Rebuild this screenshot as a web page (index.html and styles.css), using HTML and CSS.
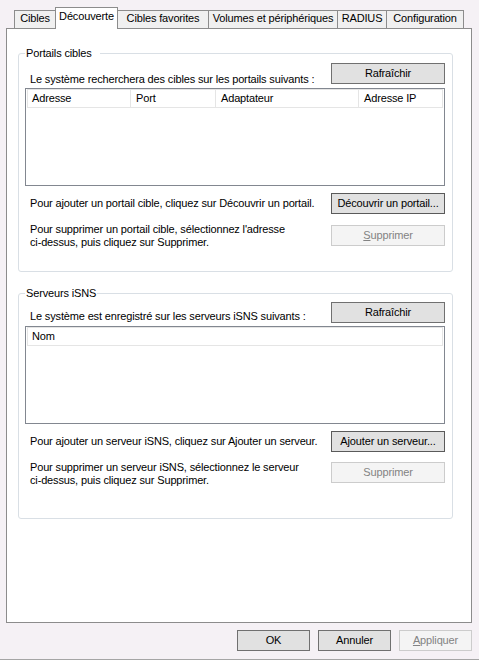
FILE: index.html
```html
<!DOCTYPE html>
<html lang="fr">
<head>
<meta charset="utf-8">
<title>Propriétés de l'initiateur iSCSI</title>
<link rel="stylesheet" href="styles.css">
</head>
<body>
<div class="window">
  <div class="tabs">
    <div class="tab t1">Cibles</div>
    <div class="tab t2 active">Découverte</div>
    <div class="tab t3">Cibles favorites</div>
    <div class="tab t4">Volumes et périphériques</div>
    <div class="tab t5">RADIUS</div>
    <div class="tab t6">Configuration</div>
  </div>
  <div class="panel">
    <fieldset class="group g1">
      <legend class="legend-wide">Portails cibles</legend>
      <div class="top-row">
        <span class="label">Le système recherchera des cibles sur les portails suivants :</span>
        <button class="btn">Rafraîchir</button>
      </div>
      <div class="list">
        <div class="list-head">
          <div class="hcell c-addr">Adresse</div>
          <div class="hcell c-port">Port</div>
          <div class="hcell c-adapt">Adaptateur</div>
          <div class="hcell c-ip">Adresse IP</div>
        </div>
      </div>
      <div class="add-row">
        <span class="label">Pour ajouter un portail cible, cliquez sur Découvrir un portail.</span>
        <button class="btn btn-focus">Découvrir un portail...</button>
      </div>
      <div class="del-row">
        <span class="label">Pour supprimer un portail cible, sélectionnez l'adresse<br>ci-dessus, puis cliquez sur Supprimer.</span>
        <button class="btn" disabled><u>S</u>upprimer</button>
      </div>
    </fieldset>
    <fieldset class="group g2">
      <legend>Serveurs iSNS</legend>
      <div class="top-row">
        <span class="label">Le système est enregistré sur les serveurs iSNS suivants :</span>
        <button class="btn">Rafraîchir</button>
      </div>
      <div class="list">
        <div class="list-head">
          <div class="hcell c-name">Nom</div>
        </div>
      </div>
      <div class="add-row">
        <span class="label">Pour ajouter un serveur iSNS, cliquez sur Ajouter un serveur.</span>
        <button class="btn btn-focus">Ajouter un serveur...</button>
      </div>
      <div class="del-row">
        <span class="label">Pour supprimer un serveur iSNS, sélectionnez le serveur<br>ci-dessus, puis cliquez sur Supprimer.</span>
        <button class="btn" disabled>Supprimer</button>
      </div>
    </fieldset>
  </div>
  <div class="footer">
    <button class="btn btn-small">OK</button>
    <button class="btn btn-small">Annuler</button>
    <button class="btn btn-small" disabled><u>A</u>ppliquer</button>
  </div>
</div>
</body>
</html>
```

FILE: styles.css
```css
* { box-sizing: border-box; }
html, body { margin: 0; padding: 0; }
body {
  background: #f5f1f5;
  font-family: "Liberation Sans", Arial, sans-serif;
  font-size: 11px;
  line-height: 13px;
  letter-spacing: -0.15px;
  color: #000;
}
.window {
  width: 479px;
  height: 660px;
  padding: 7px 7px 0 6px;
  border-bottom: 1px solid #a5a5a5;
  display: flex;
  flex-direction: column;
}
.tabs {
  display: flex;
  align-items: flex-end;
  height: 21px;
  margin-left: 8px;
  position: relative;
  z-index: 1;
  flex: none;
}
.tab {
  height: 18px;
  border: 1px solid #8c8c8c;
  border-bottom: none;
  background: #f0f0f0;
  margin-left: -1px;
  text-align: center;
  padding-top: 1px;
  white-space: nowrap;
}
.tab:first-child { margin-left: 0; }
.tab.active {
  height: 22px;
  margin-bottom: -1px;
  background: #fff;
  padding-top: 2px;
  position: relative;
  z-index: 2;
}
.t1 { width: 42px; }
.t2 { width: 63px; }
.t3 { width: 92px; }
.t4 { width: 130px; }
.t5 { width: 50px; }
.t6 { width: 78px; }

.panel {
  flex: none;
  height: 595px;
  border: 1px solid #8c8c8c;
  background: #fff;
  display: flex;
  flex-direction: column;
  align-items: flex-start;
}
.group {
  width: 435px;
  min-width: 0;
  margin: 0 0 0 11px;
  border: 1px solid #d9dfe5;
  border-radius: 3px;
  padding: 3px 7px 22px 6px;
}
.g1 { margin-top: 18px; }
.g2 { margin-top: 15px; padding-top: 2px; padding-bottom: 31px; }
.group legend {
  padding: 0 1px;
  margin: 0;
  line-height: 13px;
}
.group legend.legend-wide { padding-right: 8px; }

.label { padding-left: 5px; white-space: nowrap; }
.top-row {
  display: flex;
  justify-content: space-between;
  align-items: flex-start;
  height: 23px;
}
.top-row .label { margin-top: 10px; }
.g2 .top-row { height: 21px; }
.g2 .top-row .label { margin-top: 8px; }

.list {
  margin-top: 2px;
  height: 98px;
  border: 1px solid #828790;
  background: #fff;
}
.g2 .list { margin-top: 3px; }
.list-head {
  display: flex;
  width: 416px;
  height: 19px;
  margin-left: 1px;
}
.hcell {
  height: 19px;
  border: 1px solid #e5e5e5;
  border-left: none;
  padding: 2px 0 0 5px;
  white-space: nowrap;
}
.hcell:first-child { border-left: 1px solid #e5e5e5; padding-left: 4px; }
.c-addr { width: 104px; }
.c-port { width: 85px; }
.c-adapt { width: 143px; }
.c-ip { width: 84px; }
.c-name { width: 416px; }

.add-row {
  display: flex;
  justify-content: space-between;
  align-items: center;
  margin-top: 7px;
  height: 21px;
}
.del-row {
  display: flex;
  justify-content: space-between;
  align-items: flex-start;
  margin-top: 9px;
  height: 26px;
}
.del-row .btn { margin-top: 2px; }
.g2 .del-row .btn { margin-top: 1px; }

.btn {
  font: inherit;
  letter-spacing: inherit;
  width: 114px;
  height: 21px;
  line-height: 19px;
  padding: 0;
  margin: 0;
  border: 1px solid #707070;
  background: #e1e1e1;
  color: #000;
  text-align: center;
  white-space: nowrap;
  flex: none;
}
.btn-focus { border-color: #5a5a5a; }
.btn:disabled {
  background: #f4f4f4;
  border-color: #cccccc;
  color: #838383;
}
.btn u { text-decoration: underline; }

.footer {
  flex: none;
  display: flex;
  justify-content: flex-end;
  gap: 8px;
  margin-top: 7px;
}
.btn-small { width: 73px; }
```
